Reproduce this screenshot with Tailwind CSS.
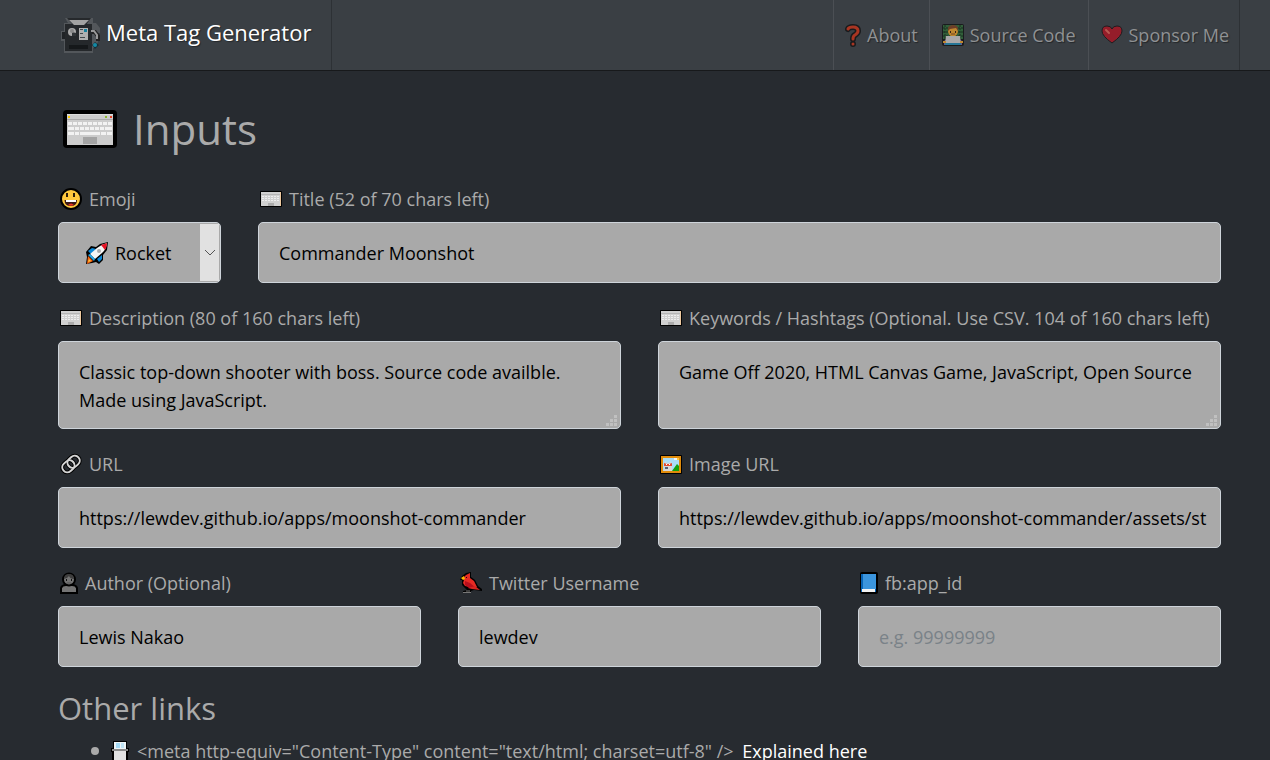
<!DOCTYPE html>
<html lang="en">
<head>
<meta charset="utf-8">
<meta name="viewport" content="width=device-width, initial-scale=1">
<title>Meta Tag Generator</title>
<script src="https://cdn.jsdelivr.net/npm/@tailwindcss/browser@4"></script>
</head>
<body class="h-screen overflow-hidden bg-[#272b30] font-['Open_Sans','Noto_Sans',sans-serif] text-lg leading-7 text-[#aaaaaa]">
<svg class="hidden" aria-hidden="true">
  <symbol id="keyboard" viewBox="0 0 54 38">
    <rect width="54" height="38" rx="4" fill="#000"/>
    <rect x="4" y="4" width="46" height="31" fill="#ccc"/>
    <rect x="4" y="4" width="46" height="1" fill="#ddd"/>
    <rect x="4" y="9" width="46" height="1" fill="#aaa"/>
    <g fill="#f2f2f2">
      <path d="M5 12h4v3H5zM10 12h4v3h-4zM15 12h4v3h-4zM20 12h4v3h-4zM25 12h4v3h-4zM30 12h4v3h-4zM35 12h4v3h-4zM40 12h4v3h-4zM45 12h4v3h-4z"/>
      <path d="M5 17h6v3H5zM12 17h4v3h-4zM17 17h4v3h-4zM22 17h4v3h-4zM27 17h4v3h-4zM32 17h4v3h-4zM37 17h4v3h-4zM42 17h7v3h-7z"/>
      <path d="M5 22h6v3H5zM12 22h4v3h-4zM17 22h20v3H17zM38 22h5v3h-5zM44 22h5v3h-5z"/>
    </g>
    <rect x="20" y="27" width="14" height="7" fill="#a3a3a3"/>
    <path d="M5 6h2v2H5z" fill="#fc0"/><path d="M42 6h2v2h-2z" fill="#8bb82d"/><path d="M47 6h2v2h-2z" fill="#e84124"/>
  </symbol>
  <symbol id="keyboard-small" viewBox="0 0 22 16">
    <rect width="22" height="16" rx="1" fill="#000"/>
    <rect x="1" y="1" width="20" height="14" fill="#d0d0d0"/>
    <path d="M1 3.500h20" stroke="#b5b5b5"/>
    <path d="M2 5.500h18M2 7.500h18M2 9.500h18" stroke="#eee" stroke-dasharray="2 1"/>
    <rect x="8" y="12" width="6" height="3" fill="#aaa"/>
    <path d="M20 1h1v14h-1z" fill="#edc9a0"/>
  </symbol>
</svg>

<header class="border-b border-[#17191b] bg-[#3a3f44] pr-[30px] pl-10 [text-shadow:1px_1px_1px_rgba(0,0,0,.4)]">
  <nav class="flex h-[70px] items-stretch justify-between">
    <a href="#" class="flex items-center gap-1.5 border-r border-[#2d3135] pr-5 pl-5 text-[22px] text-white">
      <svg class="h-9 w-10" viewBox="0 0 40 36" aria-hidden="true">
        <path d="M5 1h28v5h3l4 5v5h-2v9l-3 6h-2v5H4V24H1V14h3V6h4z" fill="#53575b"/>
        <path d="M5 7h27v27H5z" fill="#25282b"/>
        <path d="M7 1h24l-5 7H13z" fill="#26292c"/>
        <path d="M9 3h20l-5 5H14z" fill="#a3a3a3"/>
        <path d="M2 15h3v7H2z" fill="#202326"/>
        <circle cx="12" cy="15" r="4" fill="#aaa"/><path d="M12 15l4 1v3h-4z" fill="#303437"/>
        <circle cx="12" cy="14" r="2" fill="#888"/>
        <path d="M19 11h9v12h-9z" fill="#b0b0b0"/><path d="M24 12h3v3h-3z" fill="#15809d"/><path d="M20 12h3v1h-3zM20 16h3v1h-3zM20 20h5v1h-5z" fill="#44494d"/>
        <path d="M32 15h3l3 4v5" fill="none" stroke="#222" stroke-width="4"/><path d="M31 14h3l3 4v4" fill="none" stroke="#999" stroke-width="2"/>
        <path d="M9 26h19v6H9z" fill="#15181a"/><path d="M9 27h19" stroke="#34383c"/>
        <path d="M35 25l4 3-4 4-3-4z" fill="#162d34"/><circle cx="35" cy="28" r="2" fill="#148aa5"/>
      </svg>
      <span class="pb-1.5">Meta Tag Generator</span>
    </a>
    <div class="flex text-[#8f9193]">
      <a href="#" class="flex items-center gap-1.5 border-l border-[#4b4f54] px-[11px]">
        <svg class="h-6 w-4" viewBox="0 0 16 24" aria-hidden="true"><g fill="none" stroke-linecap="round" stroke-linejoin="round"><path d="M3 6q1-2 5-2 5 0 5 4 0 2-3 4-2 1-2 4M8 21v0" stroke="#191b1d" stroke-width="6"/><path d="M3 6q1-2 5-2 5 0 5 4 0 2-3 4-2 1-2 4M8 21v0" stroke="#a93522" stroke-width="3"/></g></svg>
        <span>About</span>
      </a>
      <a href="#" class="flex items-center gap-1.5 border-l border-[#4b4f54] px-3">
        <svg class="h-[22px] w-[22px]" viewBox="0 0 22 22" aria-hidden="true">
          <rect width="22" height="22" rx="2" fill="#191c1d"/><path d="M1 1h20v14H1z" fill="#315f39"/>
          <path d="M1 4h20M1 8h20M1 12h20M3 1v14M18 1v14" stroke="#182f20" stroke-dasharray="2 1"/>
          <path d="M2 21v-4l4-3h10l4 3v4z" fill="#66518b"/><ellipse cx="11" cy="7" rx="5" ry="5.500" fill="#bd8730"/>
          <path d="M6 7q-1-6 5-6t5 6l-2-3-6 1z" fill="#6c3e28"/><path d="M8 7h1v2H8zM13 7h1v2h-1z" fill="#332318"/><path d="M9 10h4" stroke="#754420"/>
          <path d="M4 12h14l1 8H3z" fill="#a9a9aa"/><path d="M3 19h16v2H3z" fill="#257697"/><path d="M1 17h3v2H1zM18 17h3v2h-3z" fill="#bd8730"/>
        </svg>
        <span>Source Code</span>
      </a>
      <a href="#" class="flex items-center gap-1.5 border-x border-l-[#4b4f54] border-r-[#2d3135] px-2.5 pl-3">
        <svg class="h-5 w-[22px]" viewBox="0 0 22 20" aria-hidden="true"><path d="M11 18Q1 11 1 6q0-5 5-5 4 0 5 3 1-3 5-3 5 0 5 5 0 5-10 12z" fill="#951d2a" stroke="#1c1d1f"/><path d="M5 5l3 3" stroke="#b75a50" stroke-width="2" stroke-linecap="round"/></svg>
        <span>Sponsor Me</span>
      </a>
    </div>
  </nav>
</header>

<main class="pr-[49px] pl-[58px]">
  <h1 class="flex h-[114px] items-center gap-4 pt-0.5 pl-[5px] text-[42px] leading-[52px] font-normal">
    <svg class="h-[38px] w-[54px]" aria-hidden="true"><use href="#keyboard"/></svg>
    <span>Inputs</span>
  </h1>

  <form class="grid grid-cols-12 gap-x-[37px] gap-y-[21px]">
    <div class="col-span-2">
      <label for="emoji" class="mb-[9px] flex items-center gap-[7px] pl-0.5">
        <svg class="h-[22px] w-[22px]" viewBox="0 0 22 22" aria-hidden="true"><circle cx="11" cy="11" r="10" fill="#ffc83d" stroke="#000" stroke-width="2"/><path d="M7 5v4M14 5v4" stroke="#2c1d0a" stroke-width="2"/><path d="M4.500 12h12.500q0 6-6.250 6t-6.250-6z" fill="#3b1915"/><path d="M6 12h10v2H6z" fill="#fff"/><path d="M8 17q3-3 6 0-3 1.500-6 0z" fill="#ef3526"/></svg>
        Emoji
      </label>
      <div class="relative text-black">
        <select id="emoji" class="block h-[61px] w-full appearance-none rounded-[5px] border border-[#ced4da] bg-[#a9a9a9] pr-6 pl-14"><option>Rocket</option></select>
        <svg class="pointer-events-none absolute top-5 left-[27px] h-[23px] w-6" viewBox="0 0 24 23" aria-hidden="true">
          <path d="M1 10l5-6 5 1 4-3 8-2-1 8-4 5v5l-4 4-3-2-4 1-6 1 1-7z" fill="#000"/>
          <path d="M3 9l4-3 4 1-5 5zM12 17l5-4v4l-3 3z" fill="#0b88d8"/>
          <path d="M5 12L12 6q5-4 10-5-1 7-5 10l-7 6z" fill="#f5f5f5"/><path d="M16 3q3-1 6-2 0 4-2 7z" fill="#e81224"/>
          <circle cx="14" cy="9" r="2" fill="#aaa"/><path d="M5 12l5 5-1 2-6-6z" fill="#27a7e8"/><path d="M3 14l5 5-6 3z" fill="#f7630c"/><path d="M4 17l2 2-3 1z" fill="#ffc83d"/>
        </svg>
        <span class="pointer-events-none absolute inset-y-0.5 right-0.5 flex w-[19px] items-center justify-center bg-[#e1e1e1]">
          <svg class="h-2 w-3" viewBox="0 0 12 8" fill="none" stroke="#555" aria-hidden="true"><path d="M1 1l5 5 5-5"/></svg>
        </span>
      </div>
    </div>

    <div class="col-span-10">
      <label for="title" class="mb-[9px] flex items-center gap-[7px] pl-0.5"><svg class="h-4 w-[22px]" aria-hidden="true"><use href="#keyboard-small"/></svg>Title (52 of 70 chars left)</label>
      <input id="title" type="text" value="Commander Moonshot" class="block h-[61px] w-full rounded-[5px] border border-[#ced4da] bg-[#a9a9a9] px-5 text-black">
    </div>

    <div class="col-span-6">
      <label for="description" class="mb-[9px] flex items-center gap-[7px] pl-0.5"><svg class="h-4 w-[22px]" aria-hidden="true"><use href="#keyboard-small"/></svg>Description (80 of 160 chars left)</label>
      <div class="relative">
        <textarea id="description" rows="2" class="block h-[88px] w-full resize-none overflow-hidden rounded-[5px] border border-[#ced4da] bg-[#a9a9a9] px-5 py-4 text-black">Classic top-down shooter with boss. Source code availble. Made using JavaScript.</textarea>
        <svg class="pointer-events-none absolute right-1 bottom-[3px] h-[11px] w-[11px]" viewBox="0 0 11 11" fill="#c0c0c0" aria-hidden="true"><path d="M8 0h3v3H8zM4 4h3v3H4zM8 4h3v3H8zM0 8h3v3H0zM4 8h3v3H4zM8 8h3v3H8z"/></svg>
      </div>
    </div>

    <div class="col-span-6">
      <label for="keywords" class="mb-[9px] flex items-center gap-[7px] pl-0.5 whitespace-nowrap"><svg class="h-4 w-[22px] shrink-0" aria-hidden="true"><use href="#keyboard-small"/></svg>Keywords / Hashtags (Optional. Use CSV. 104 of 160 chars left)</label>
      <div class="relative">
        <textarea id="keywords" rows="2" class="block h-[88px] w-full resize-none overflow-hidden rounded-[5px] border border-[#ced4da] bg-[#a9a9a9] px-5 py-4 text-black">Game Off 2020, HTML Canvas Game, JavaScript, Open Source</textarea>
        <svg class="pointer-events-none absolute right-1 bottom-[3px] h-[11px] w-[11px]" viewBox="0 0 11 11" fill="#c0c0c0" aria-hidden="true"><path d="M8 0h3v3H8zM4 4h3v3H4zM8 4h3v3H8zM0 8h3v3H0zM4 8h3v3H4zM8 8h3v3H8z"/></svg>
      </div>
    </div>

    <div class="col-span-6">
      <label for="url" class="mb-[9px] flex items-center gap-[7px] pl-0.5">
        <svg class="h-[22px] w-[22px]" viewBox="0 0 22 22" aria-hidden="true"><g fill="none" transform="rotate(-42 11 11)"><rect x="1" y="6" width="13" height="10" rx="5" stroke="#000" stroke-width="4"/><rect x="8" y="6" width="13" height="10" rx="5" stroke="#000" stroke-width="4"/><rect x="1" y="6" width="13" height="10" rx="5" stroke="#d5d5d5" stroke-width="2"/><rect x="8" y="6" width="13" height="10" rx="5" stroke="#d5d5d5" stroke-width="2"/></g></svg>
        URL
      </label>
      <input id="url" type="text" value="https://lewdev.github.io/apps/moonshot-commander" class="block h-[61px] w-full rounded-[5px] border border-[#ced4da] bg-[#a9a9a9] px-5 text-black">
    </div>

    <div class="col-span-6">
      <label for="image" class="mb-[9px] flex items-center gap-[7px] pl-0.5">
        <svg class="h-[19px] w-[22px]" viewBox="0 0 22 19" aria-hidden="true"><rect width="22" height="19" rx="1" fill="#000"/><path d="M1 1h20v17H1z" fill="#df8b0b"/><path d="M3 3h16v13H3z" fill="#a9ddf8"/><path d="M12 16l5-7 2 2v5z" fill="#13a10e"/><path d="M14 3h4v2h-4z" fill="#f4f4f4"/><path d="M17 3h2v2h-2z" fill="#ffc83d"/><path d="M5 6l2 2h2l2-2v4l1 2v4H4v-4l1-2z" fill="#d8d8d8"/><path d="M4 8l3 1h2l3-1v3H4z" fill="#e34c33"/><path d="M6 9h1v1H6zM9 9h1v1H9z" fill="#fff"/><path d="M5 12h3v2H5z" fill="#526178"/></svg>
        Image URL
      </label>
      <input id="image" type="text" value="https://lewdev.github.io/apps/moonshot-commander/assets/st" class="block h-[61px] w-full rounded-[5px] border border-[#ced4da] bg-[#a9a9a9] pr-2 pl-5 text-black">
    </div>

    <div class="col-span-4">
      <label for="author" class="mb-[9px] flex items-center gap-[7px] pl-0.5">
        <svg class="h-[22px] w-[18px]" viewBox="0 0 18 22" aria-hidden="true"><path d="M1 21v-5q1-3 5-3h6q4 0 5 3v5z" fill="#747474" stroke="#000" stroke-width="2"/><circle cx="9" cy="7.500" r="6" fill="#747474" stroke="#000" stroke-width="2"/><path d="M4 7q0-5 5-5t5 5q-4 0-5-3-1 2-5 3z" fill="#3e3e3e"/><path d="M6 7h1v2H6zM11 7h1v2h-1z" fill="#111"/><path d="M7 11h4" stroke="#555"/></svg>
        Author (Optional)
      </label>
      <input id="author" type="text" value="Lewis Nakao" class="block h-[61px] w-full rounded-[5px] border border-[#ced4da] bg-[#a9a9a9] px-5 text-black">
    </div>

    <div class="col-span-4">
      <label for="twitter" class="mb-[9px] flex items-center gap-[7px] pl-0.5">
        <svg class="h-[22px] w-[22px]" viewBox="0 0 22 22" aria-hidden="true"><path d="M2 4l4-3 5-1v5l4 3 3 6 4 3v2l-8-1-3 1v2H3v-2l4-1-5-5V8H0z" fill="#000"/><path d="M3 6l3-3 4-2v5l4 3 3 6h-7l-5-1-2-3 1-3z" fill="#e62b24"/><path d="M5 9l5 2 6 5H9l-4-3z" fill="#b70f1d"/><path d="M15 14l5 4-8-1-4-1z" fill="#d72520"/><path d="M1 6l3-2 1 3-2 1z" fill="#ffb900"/><path d="M6 5h1v1H6z" fill="#111"/><path d="M3 20.500h8M7 18v3M9 18v3" stroke="#777"/></svg>
        Twitter Username
      </label>
      <input id="twitter" type="text" value="lewdev" class="block h-[61px] w-full rounded-[5px] border border-[#ced4da] bg-[#a9a9a9] px-5 text-black">
    </div>

    <div class="col-span-4">
      <label for="fb" class="mb-[9px] flex items-center gap-[7px] pl-0.5">
        <svg class="h-[22px] w-[18px]" viewBox="0 0 18 22" aria-hidden="true"><rect width="18" height="22" rx="2" fill="#000"/><path d="M1 2h15v18H1z" fill="#0864b5"/><path d="M3 2h13v15H3z" fill="#3b95dd"/><path d="M2 17h13v3H2z" fill="#f2f2f2"/></svg>
        fb:app_id
      </label>
      <input id="fb" type="text" placeholder="e.g. 99999999" class="block h-[61px] w-full rounded-[5px] border border-[#ced4da] bg-[#a9a9a9] px-5 text-black placeholder:text-[#7a8288]">
    </div>
  </form>

  <h2 class="mt-5 mb-2 text-[31px] leading-[42px] font-normal">Other links</h2>
  <ul>
    <li class="flex items-center pl-[33px] whitespace-nowrap">
      <span class="mr-3 h-2 w-2 rounded-full bg-[#aaaaaa]"></span>
      <svg class="mr-2 h-[22px] w-[18px]" viewBox="0 0 18 22" aria-hidden="true"><path d="M2 1h14v7h2v4h-1v10H1V12H0V8h2z" fill="#000"/><path d="M3 2h12v8H3z" fill="#eef4f7"/><path d="M5 3h4v5H5z" fill="#a4d9f5"/><path d="M10 3h3v5h-3z" fill="#bfe3f4"/><path d="M1 9h16v2H1z" fill="#888"/><path d="M3 11h12v10H3z" fill="#e1e1e1"/></svg>
      <span>&lt;meta http-equiv="Content-Type" content="text/html; charset=utf-8" /&gt; <a href="#" class="ml-1 text-white">Explained here</a></span>
    </li>
  </ul>
</main>
</body>
</html>
